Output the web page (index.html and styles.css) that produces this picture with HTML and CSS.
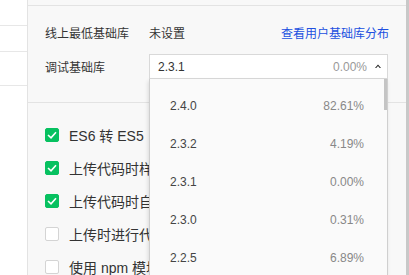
FILE: index.html
```html
<!DOCTYPE html>
<html lang="zh-CN">
<head>
    <meta charset="UTF-8">
    <title>项目设置</title>
    <link rel="stylesheet" href="styles.css">
</head>
<body>
    <div class="layout">
        <div class="side">
            <div class="side-row r1"></div>
            <div class="side-row r2"></div>
            <div class="side-row r3"></div>
        </div>

        <div class="panel">
            <div class="panel-top"></div>

            <div class="section libs">
                <div class="row">
                    <div class="label">线上最低基础库</div>
                    <div class="value">未设置</div>
                    <a class="link" href="#">查看用户基础库分布</a>
                </div>
                <div class="row">
                    <div class="label">调试基础库</div>
                    <div class="select">
                        <span class="select-ver">2.3.1</span>
                        <span class="select-pct">0.00%</span>
                        <svg class="caret" width="6" height="4" viewBox="0 0 6 4"><path d="M0 4 L3 0.5 L6 4 L4.8 4 L3 2 L1.2 4 Z" fill="#222"/></svg>

                        <div class="dropdown">
                            <div class="scroll-thumb"></div>
                            <div class="option"><span>2.4.0</span><span class="pct">82.61%</span></div>
                            <div class="option"><span>2.3.2</span><span class="pct">4.19%</span></div>
                            <div class="option"><span>2.3.1</span><span class="pct">0.00%</span></div>
                            <div class="option"><span>2.3.0</span><span class="pct">0.31%</span></div>
                            <div class="option"><span>2.2.5</span><span class="pct">6.89%</span></div>
                        </div>
                    </div>
                </div>
            </div>

            <div class="section checks">
                <label class="check"><span class="box on"><svg width="10" height="8" viewBox="0 0 10 8"><path d="M1 4 L4 6.8 L9 1.2" fill="none" stroke="#fff" stroke-width="1.6"/></svg></span>ES6 转 ES5</label>
                <label class="check"><span class="box on"><svg width="10" height="8" viewBox="0 0 10 8"><path d="M1 4 L4 6.8 L9 1.2" fill="none" stroke="#fff" stroke-width="1.6"/></svg></span>上传代码时样式自动补全</label>
                <label class="check"><span class="box on"><svg width="10" height="8" viewBox="0 0 10 8"><path d="M1 4 L4 6.8 L9 1.2" fill="none" stroke="#fff" stroke-width="1.6"/></svg></span>上传代码时自动压缩</label>
                <label class="check"><span class="box"></span>上传时进行代码保护</label>
                <label class="check"><span class="box"></span>使用 npm 模块</label>
            </div>
        </div>

        <div class="outer-scroll"></div>
    </div>
</body>
</html>
```

FILE: styles.css
```css
* {
    box-sizing: border-box;
}

body {
    margin: 0;
    background-color: #fff;
    font-family: "Liberation Sans", "Noto Sans CJK SC", sans-serif;
    color: #353535;
    overflow: hidden;
}

.layout {
    display: flex;
    height: 275px;
    overflow: hidden;
}

.side {
    width: 28px;
    background-color: #fff;
    border-right: 1px solid #e3e3e3;
}

.side-row {
    border-bottom: 1px solid #e7e7e7;
}

.r1 {
    height: 26px;
}

.r2 {
    height: 26px;
}

.r3 {
    height: 34px;
}

.panel {
    flex: 1;
    background-color: #f8f8f8;
}

.panel-top {
    height: 6px;
    border-bottom: 1px solid #e3e3e3;
}

.section {
    padding-left: 17px;
}

.libs {
    padding-top: 14px;
    padding-bottom: 23px;
    border-bottom: 1px solid #e3e3e3;
    display: flex;
    flex-direction: column;
    gap: 9px;
}

.row {
    display: flex;
    align-items: center;
    height: 25px;
    font-size: 12px;
}

.label {
    width: 104px;
}

.value {
    flex: 1;
}

.link {
    color: #2150e0;
    text-decoration: none;
    margin-right: 17px;
}

.select {
    position: relative;
    width: 239px;
    height: 25px;
    background-color: #fff;
    border: 1px solid #d9d9d9;
    display: flex;
    align-items: center;
    padding: 0 6px 0 8px;
}

.select-ver {
    flex: 1;
    color: #333;
}

.select-pct {
    color: #999;
}

.caret {
    margin-left: 8px;
    margin-top: -1px;
}

.dropdown {
    position: absolute;
    top: 24px;
    left: -1px;
    width: 239px;
    height: 196px;
    background-color: #fafafa;
    border-left: 1px solid #cfcfcf;
    border-right: 1px solid #cfcfcf;
    box-shadow: -1px 2px 4px rgba(0, 0, 0, 0.12);
    padding-top: 8px;
    overflow: hidden;
}

.scroll-thumb {
    position: absolute;
    top: 0;
    right: 0;
    width: 3px;
    height: 31px;
    background-color: #c4c4c4;
}

.option {
    display: flex;
    justify-content: space-between;
    align-items: center;
    height: 38px;
    padding: 0 23px 0 20px;
    font-size: 12px;
    color: #444;
}

.pct {
    color: #888;
}

.checks {
    padding-top: 15px;
}

.check {
    display: flex;
    align-items: center;
    height: 33px;
    font-size: 14px;
    color: #333;
    white-space: nowrap;
}

.box {
    width: 14px;
    height: 14px;
    margin-right: 10px;
    border: 1px solid #d4d4d4;
    border-radius: 2px;
    background-color: #fff;
    display: flex;
    align-items: center;
    justify-content: center;
}

.box.on {
    background-color: #07c160;
    border-color: #07c160;
}

.outer-scroll {
    width: 3px;
    background-color: #c8c8c8;
}
```
